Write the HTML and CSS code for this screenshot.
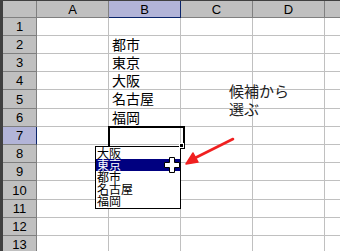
FILE: index.html
```html
<!DOCTYPE html>
<html lang="ja">
<head>
<meta charset="utf-8">
<link rel="stylesheet" href="styles.css">
</head>
<body>
<div class="sheet">
  <div class="grid">
    <div class="hd corner"></div><div class="hd col">A</div><div class="hd col sel-col">B</div><div class="hd col">C</div><div class="hd col">D</div><div class="hd col last"></div>
    <div class="hd row">1</div><div class="c"></div><div class="c"></div><div class="c"></div><div class="c"></div><div class="c"></div>
    <div class="hd row">2</div><div class="c"></div><div class="c">都市</div><div class="c"></div><div class="c"></div><div class="c"></div>
    <div class="hd row">3</div><div class="c"></div><div class="c">東京</div><div class="c"></div><div class="c"></div><div class="c"></div>
    <div class="hd row">4</div><div class="c"></div><div class="c">大阪</div><div class="c"></div><div class="c"></div><div class="c"></div>
    <div class="hd row">5</div><div class="c"></div><div class="c">名古屋</div><div class="c"></div><div class="c"></div><div class="c"></div>
    <div class="hd row">6</div><div class="c"></div><div class="c">福岡</div><div class="c"></div><div class="c"></div><div class="c"></div>
    <div class="hd row sel-row">7</div><div class="c"></div><div class="c active"><span class="handle"></span></div><div class="c"></div><div class="c"></div><div class="c"></div>
    <div class="hd row">8</div><div class="c"></div><div class="c"></div><div class="c"></div><div class="c"></div><div class="c"></div>
    <div class="hd row">9</div><div class="c"></div><div class="c"></div><div class="c"></div><div class="c"></div><div class="c"></div>
    <div class="hd row">10</div><div class="c"></div><div class="c"></div><div class="c"></div><div class="c"></div><div class="c"></div>
    <div class="hd row">11</div><div class="c"></div><div class="c"></div><div class="c"></div><div class="c"></div><div class="c"></div>
    <div class="hd row">12</div><div class="c"></div><div class="c"></div><div class="c"></div><div class="c"></div><div class="c"></div>
    <div class="hd row">13</div><div class="c"></div><div class="c"></div><div class="c"></div><div class="c"></div><div class="c"></div>
  </div>

  <ul class="dropdown">
    <li>大阪</li>
    <li class="hl">東京</li>
    <li>都市</li>
    <li>名古屋</li>
    <li>福岡</li>
  </ul>

  <svg class="cursor" width="16" height="16" viewBox="0 0 16 16">
    <path d="M5.5 0.5h5v5h5v5h-5v5h-5v-5h-5v-5h5z" fill="#fff" stroke="#000" stroke-width="1"/>
  </svg>

  <div class="note">候補から<br>選ぶ</div>

  <svg class="arrow" width="60" height="40" viewBox="0 0 60 40">
    <line x1="52" y1="10" x2="12" y2="30" stroke="#f02020" stroke-width="2.6" stroke-linecap="round"/>
    <path d="M5 35 L12 24 L17 33 Z" fill="#f02020" stroke="#f02020" stroke-width="1.5" stroke-linejoin="round"/>
  </svg>
</div>
</body>
</html>
```

FILE: styles.css
```css
* { box-sizing: border-box; }
html, body { margin: 0; padding: 0; background: #fff; }
body { width: 340px; height: 251px; overflow: hidden; }

.sheet {
  position: relative;
  width: 340px;
  height: 251px;
  overflow: hidden;
  border-left: 3px solid #404040;
  border-top: 1px solid #404040;
}

.grid {
  display: grid;
  grid-template-columns: 34px 72px 72px 72px 72px 40px;
  grid-template-rows: 17px 18px 18px 18px 18px 19px 18px 18px 18px 18px 19px 18px 18px 18px;
}

.hd {
  background: #c0c0c0;
  border-right: 1px solid #808080;
  border-bottom: 1px solid #808080;
  font-family: "Liberation Sans", Arial, sans-serif;
  font-size: 13px;
  color: #000;
  display: flex;
  align-items: center;
  justify-content: center;
  line-height: 1;
}
.hd.last { border-right: none; }
.hd.sel-col {
  background: #b2b4d8;
  border-bottom: 1px solid #0a246a;
  border-right: 1px solid #0a246a;
}
.hd.sel-row {
  background: #b2b4d8;
  border-right: 1px solid #0a246a;
}

.c {
  border-right: 1px solid #c0c0c0;
  border-bottom: 1px solid #c0c0c0;
  font-family: "Noto Sans CJK JP", "Liberation Sans", sans-serif;
  font-size: 14px;
  line-height: 17px;
  color: #000;
  padding-left: 3px;
  white-space: nowrap;
}

.c.active { position: relative; }
.c.active::after {
  content: "";
  position: absolute;
  left: -1px;
  top: -1px;
  width: 73px;
  height: 19px;
  border: 2px solid #000;
}
.handle {
  position: absolute;
  right: -4px;
  bottom: -4px;
  width: 5px;
  height: 5px;
  background: #000;
  border: 1px solid #fff;
  z-index: 2;
}

.dropdown {
  position: absolute;
  left: 92px;
  top: 145px;
  width: 86px;
  margin: 0;
  padding: 0 0 1px 0;
  list-style: none;
  background: #fff;
  border: 1px solid #000;
  font-family: "Noto Sans CJK JP", sans-serif;
  font-size: 12px;
  line-height: 12px;
}
.dropdown li {
  height: 12px;
  padding-left: 1px;
  color: #000;
  overflow: hidden;
}
.dropdown li.hl {
  background: #000080;
  color: #fff;
}

.cursor {
  position: absolute;
  left: 161px;
  top: 156px;
}

.note {
  position: absolute;
  left: 226px;
  top: 81px;
  font-family: "Noto Sans CJK JP", sans-serif;
  font-size: 15px;
  line-height: 18px;
  color: #222;
}

.arrow {
  position: absolute;
  left: 178px;
  top: 128px;
}
```
